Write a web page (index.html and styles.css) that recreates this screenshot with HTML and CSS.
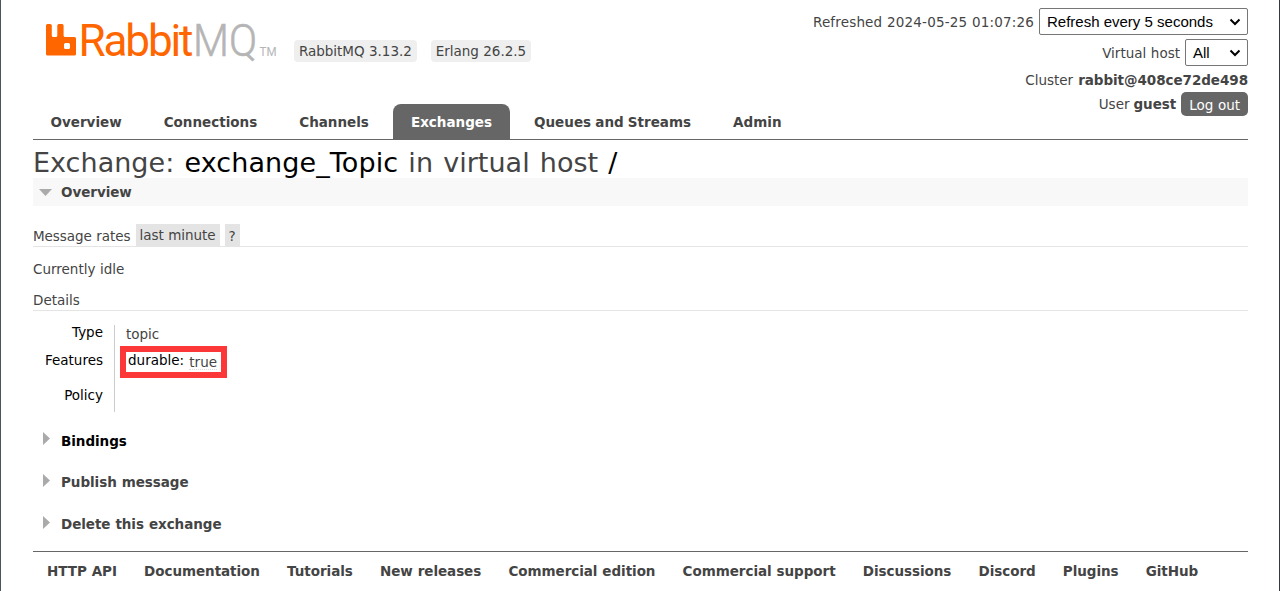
FILE: index.html
```
<!DOCTYPE html>
<html lang="en">
<head>
<meta charset="utf-8">
<title>RabbitMQ Management</title>
<link rel="stylesheet" href="styles.css">
</head>
<body>
<div class="page">
  <header class="header">
    <div class="brand">
      <svg class="logo" width="240" height="48" viewBox="0 0 240 48">
        <path fill="#ff6600" fill-rule="evenodd" d="M7.500 4h2.800q1.500 0 1.500 1.500v10q0 1.500 1.500 1.500h2.500q1.500 0 1.500-1.500v-10q0-1.500 1.500-1.500h3.300q1.500 0 1.500 1.500v10q0 1.500 1.500 1.500h9.400q1.500 0 1.500 1.500v15.500q0 1.500-1.500 1.500H7.500q-1.500 0-1.500-1.500V5.500Q6 4 7.500 4zM25.500 23q-1.500 0-1.500 1.500v3q0 1.500 1.500 1.500h3q1.500 0 1.500-1.500v-3q0-1.500-1.500-1.500z"/>
        <text class="logo-name" x="38.500" y="35.500" textLength="115" lengthAdjust="spacing">Rabbit</text>
        <text class="logo-mq" x="153" y="35.500" textLength="64" lengthAdjust="spacingAndGlyphs">MQ</text>
        <text class="logo-tm" x="219.500" y="35.500" textLength="17" lengthAdjust="spacingAndGlyphs">TM</text>
      </svg>
      <span class="version">RabbitMQ 3.13.2</span>
      <span class="version">Erlang 26.2.5</span>
    </div>
    <div class="status">
      <div class="status-row refresh"><span>Refreshed 2024-05-25 01:07:26</span>
        <span class="select select-wide">Refresh every 5 seconds<svg width="12" height="8" viewBox="0 0 12 8"><path d="M1.500 1.500L6 6l4.500-4.500"/></svg></span></div>
      <div class="status-row vhost"><span>Virtual host</span>
        <span class="select select-small">All<svg width="12" height="8" viewBox="0 0 12 8"><path d="M1.500 1.500L6 6l4.500-4.500"/></svg></span></div>
      <div class="status-row cluster"><span>Cluster</span><b>rabbit@408ce72de498</b></div>
      <div class="status-row user"><span>User</span><b>guest</b><span class="logout">Log out</span></div>
    </div>
  </header>
  <nav class="tabs">
    <a>Overview</a><a>Connections</a><a>Channels</a><a class="selected">Exchanges</a><a>Queues and Streams</a><a>Admin</a>
  </nav>
  <main>
    <h1>Exchange: <b>exchange_Topic</b> in virtual host <b>/</b></h1>
    <h2 class="open"><svg class="arrow" width="13" height="7" viewBox="0 0 13 7"><path d="M0 0h13L6.500 7z"/></svg>Overview</h2>
    <div class="subhead rates"><span>Message rates</span><span class="chip range">last minute</span><span class="chip help">?</span></div>
    <p class="idle">Currently idle</p>
    <div class="subhead details">Details</div>
    <div class="facts">
      <div class="labels"><span>Type</span><span>Features</span><span>Policy</span></div>
      <div class="values"><span class="topic">topic</span><div class="feature"><span>durable:</span><abbr>true</abbr></div></div>
    </div>
    <h2 class="closed active"><svg class="arrow" width="7" height="13" viewBox="0 0 7 13"><path d="M0 0v13L7 6.500z"/></svg>Bindings</h2>
    <h2 class="closed"><svg class="arrow" width="7" height="13" viewBox="0 0 7 13"><path d="M0 0v13L7 6.500z"/></svg>Publish message</h2>
    <h2 class="closed"><svg class="arrow" width="7" height="13" viewBox="0 0 7 13"><path d="M0 0v13L7 6.500z"/></svg>Delete this exchange</h2>
  </main>
  <footer>
    <a>HTTP API</a><a>Documentation</a><a>Tutorials</a><a>New releases</a><a>Commercial edition</a><a>Commercial support</a><a>Discussions</a><a>Discord</a><a>Plugins</a><a>GitHub</a>
  </footer>
</div>
</body>
</html>
```
FILE: styles.css
```
* { box-sizing: border-box; }
body { margin: 0; background: #fff; color: #444; font: 13.500px/18px Verdana, "DejaVu Sans", sans-serif; word-spacing: .3px; }
b, a, h2 { font-weight: 700; letter-spacing: -.05px; }
.page { height: 591px; padding: 0 31px 0 32px; border-left: 1px solid #49545f; border-right: 1px solid #35383d; overflow: hidden; white-space: nowrap; }
.header { display: flex; justify-content: space-between; height: 104px; }
.brand { display: flex; align-items: flex-start; padding: 20px 0 0 7px; }
.logo { margin-right: 14px; overflow: visible; font-family: Roboto, sans-serif; letter-spacing: 0; }
.logo-name { font-size: 44px; fill: #f60; }
.logo-mq { font-size: 44px; font-weight: 300; fill: #b5b5b5; stroke: #b5b5b5; stroke-width: .6px; }
.logo-tm { font-size: 12px; fill: #b5b5b5; }
.version { margin: 20px 14px 0 0; height: 22px; padding: 1px 5px; border-radius: 4px; background: #efefef; letter-spacing: -.04px; line-height: 20px; }
.status { display: flex; flex-direction: column; align-items: flex-end; padding-top: 8px; }
.status-row { display: flex; align-items: center; gap: 5px; flex: none; }
.refresh { height: 27px; margin-bottom: 4px; letter-spacing: .17px; }
.vhost { height: 27px; }
.cluster { height: 27px; }
.user { height: 24px; margin-top: -1px; }
.user span:first-child { margin-right: -1px; }
.select { display: flex; align-items: center; justify-content: space-between; height: 27px; padding: 0 6px 0 7px; border: 1px solid #767676; border-radius: 2px; color: #000; font: 15px/25px "Liberation Sans", Arial, sans-serif; letter-spacing: 0; word-spacing: 0; }
.select svg { fill: none; stroke: #000; stroke-width: 2; }
.select-wide { width: 209px; }
.select-small { width: 63px; }
.logout { height: 24px; padding: 0 8px; border-radius: 5px; background: #666; color: #fff; line-height: 26px; }
.tabs { display: flex; gap: 7px; height: 36px; border-bottom: 1px solid #666; }
.tabs a { padding: 0 17.500px; line-height: 37px; height: 35px; letter-spacing: 0; word-spacing: -.5px; }
.tabs .selected { border-radius: 8px 8px 0 0; background: #666; color: #fff; }
h1 { margin: 0; height: 38px; padding-top: 5px; font-size: 27px; line-height: 36px; font-weight: 400; letter-spacing: .03px; word-spacing: 1.500px; }
h1 b { font-weight: 400; color: #000; letter-spacing: .1px; }
h2 { display: flex; align-items: center; margin: 0; font-size: 13.500px; }
.arrow { fill: #aaa; }
.open { height: 28px; padding: 1px 0 0 6px; gap: 9px; background: #f8f8f8; line-height: 19px; }
.subhead { display: flex; border-bottom: 1px solid #e4e4e4; }
.rates { height: 23px; margin-top: 18px; line-height: 24px; letter-spacing: -.05px; }
.chip { background: #e4e4e4; padding: 0 4px; margin-left: 5px; line-height: 22px; }
.help { line-height: 24px; height: 22px; }
.idle { margin: 13px 0; }
.details { height: 20px; }
.facts { display: flex; height: 87px; margin-top: 14px; }
.labels { display: flex; flex-direction: column; align-items: flex-end; width: 82px; padding-right: 11px; border-right: 1px solid #ccc; color: #000; line-height: 14px; }
.labels span + span { margin-top: 14px; }
.labels span:last-child { margin-top: 21px; }
.values { display: flex; flex-direction: column; align-items: flex-start; padding-left: 5px; }
.topic { height: 21px; padding-left: 6px; line-height: 18px; }
.feature { display: flex; gap: 5px; width: 107px; height: 32px; padding-left: 2px; border: 6px solid #fc3737; line-height: 17px; color: #000; }
.feature abbr { height: 18px; padding-top: 1px; color: #444; border-bottom: 1px dotted #ddd; line-height: 18px; letter-spacing: .1px; }
.closed { height: 28px; padding-left: 10px; gap: 11px; margin-bottom: 14px; }
.closed .arrow { margin-top: -4px; }
.facts + .closed { margin-top: 15px; margin-bottom: 13px; }
.facts + .closed .arrow { margin-top: -5px; }
.active { color: #000; }
footer { display: flex; gap: 27.200px; margin-top: -1px; padding: 10px 14px; border-top: 1px solid #666; }
```
